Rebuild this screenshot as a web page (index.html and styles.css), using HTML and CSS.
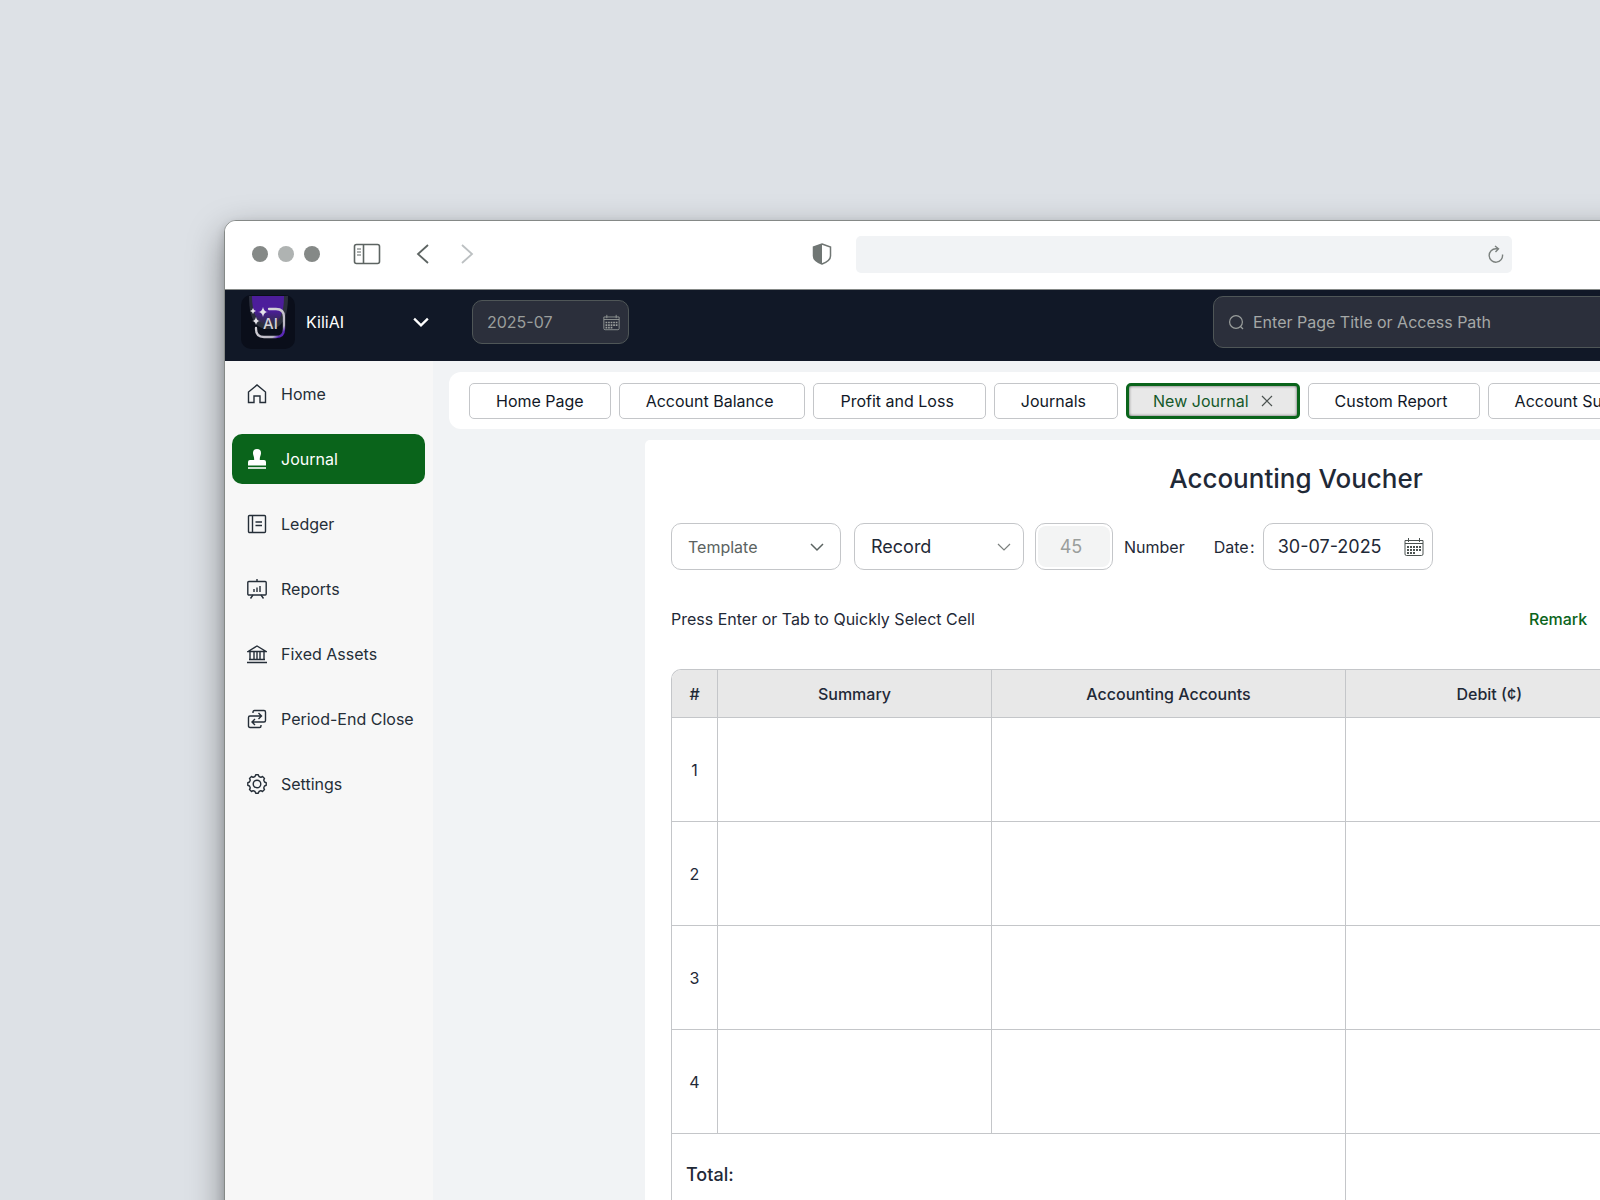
FILE: index.html
```html
<!DOCTYPE html>
<html lang="en">
<head>
<meta charset="utf-8">
<meta name="viewport" content="width=device-width, initial-scale=1">
<title>KiliAI – Accounting Voucher</title>
<link rel="stylesheet" href="styles.css">
</head>
<body>
<svg class="sprite" aria-hidden="true">
  <symbol id="calendar" viewBox="0 0 20 20">
    <path d="M1 3.5h18v13.500a1.500 1.500 0 0 1-1.500 1.500h-15a1.500 1.500 0 0 1-1.500-1.500zM1 6.500h18M4.500 1v4M15.500 1v4" fill="none" stroke="currentColor"/>
    <path d="M3 10h14M3 13h14M3 16h9" fill="none" stroke="currentColor" stroke-width="2" stroke-dasharray="2 1"/>
  </symbol>
  <symbol id="chevron" viewBox="0 0 14 14">
    <path d="M1 4l6 6 6-6" fill="none" stroke="currentColor" stroke-width="inherit"/>
  </symbol>
</svg>

<div class="window">
  <header class="toolbar">
    <div class="toolbar-left">
      <div class="lights"><i></i><i class="light"></i><i></i></div>
      <button class="plain panel-toggle" aria-label="Toggle sidebar">
        <svg width="28" height="22" viewBox="0 0 28 22" fill="none" stroke="#5d6462"><rect x="1.500" y="1.500" width="25" height="19" rx="2" stroke-width="1.600"/><path d="M10.500 1.500v19" stroke-width="1.600"/><path d="M4 6h4M4 9h4M4 12h4"/></svg>
      </button>
      <div class="history">
        <button class="plain" aria-label="Back"><svg width="14" height="20" viewBox="0 0 14 20" fill="none" stroke="#5d6462" stroke-width="1.800"><path d="M12 1L2 10l10 9"/></svg></button>
        <button class="plain" aria-label="Forward"><svg width="14" height="20" viewBox="0 0 14 20" fill="none" stroke="#bcc0c2" stroke-width="1.800"><path d="M2 1l10 9-10 9"/></svg></button>
      </div>
    </div>
    <div class="address">
      <svg width="20" height="22" viewBox="0 0 20 22"><path d="M10 1l8.500 3v9c0 4-4.500 6.500-8.500 8-4-1.500-8.500-4-8.500-8V4z" fill="#fff" stroke="#707674" stroke-width="1.500"/><path d="M10 1v20c-4-1.500-8.500-4-8.500-8V4z" fill="#707674"/></svg>
      <div class="address-field">
        <input type="text" aria-label="Address">
        <button class="plain" aria-label="Reload"><svg width="16" height="18" viewBox="0 0 16 18" fill="none" stroke="#7b807e" stroke-width="1.400"><path d="M14.500 9.500a6.700 6.700 0 1 1-6.500-5.700h2M7 1l3.500 2.800L7.500 7"/></svg></button>
      </div>
    </div>
  </header>

  <div class="navbar">
    <button class="plain company">
      <svg class="logo" width="54" height="54" viewBox="0 0 54 54">
        <defs>
          <linearGradient id="glow" x1="0" y1="0" x2="0" y2="1"><stop offset="0.500" stop-color="#4c1d9b"/><stop offset="1" stop-color="#2b2f3c"/></linearGradient>
          <linearGradient id="ring" x1="0" y1="0" x2="1" y2="1"><stop offset="0.300" stop-color="#d4d2d8"/><stop offset="0.800" stop-color="#b9b6c2"/><stop offset="0.900" stop-color="#5a28b8"/></linearGradient>
        </defs>
        <rect width="54" height="54" rx="10" fill="#0a0e1a"/>
        <path d="M8 1h39c0 24-7 33-19.500 33S8 25 8 1z" fill="#2b2f3c"/>
        <path d="M11 1h32c0 18-5 29-15.500 29S11 19 11 1z" fill="url(#glow)"/>
        <path d="M28 14h7q8 0 8 8v12q0 8-8 8h-12q-8 0-8-8v-1" fill="none" stroke="url(#ring)" stroke-width="2.300" stroke-linecap="round"/>
        <path d="M22 12q1 5 5 5-4 0-5 5-1-5-5-5 4 0 5-5zM15 22q1 4 4 4-3 0-4 4-1-4-4-4 3 0 4-4zM12 13l1 2 2 1-2 1-1 2-1-2-2-1 2-1z" fill="#e5e3ea"/>
        <text x="22" y="34" class="logo-text">AI</text>
      </svg>
      <span>KiliAI</span>
      <svg class="company-chevron" width="16" height="16"><use href="#chevron"/></svg>
    </button>
    <div class="month">
      <input type="text" value="2025-07" aria-label="Period">
      <svg width="17" height="17"><use href="#calendar"/></svg>
    </div>
    <div class="search">
      <svg width="16" height="16" viewBox="0 0 16 16" fill="none" stroke="#9a9e9c" stroke-width="1.200"><circle cx="8" cy="8" r="6.400"/><path d="M12.500 12.500l2.500 2.500"/></svg>
      <input type="search" placeholder="Enter Page Title or Access Path" aria-label="Search pages">
    </div>
  </div>

  <div class="body">
    <nav class="sidebar">
      <a href="#"><svg viewBox="0 0 20 20"><path d="M1.500 8L10 1l8.500 7v10.500h-5.500V12H7v6.500H1.500z"/></svg>Home</a>
      <a href="#" class="active"><svg viewBox="0 0 20 20"><path d="M10 0a4 4 0 0 1 4 4c0 2.500-1.200 3-1.200 7H17a2 2 0 0 1 2 2v3.500H1V13a2 2 0 0 1 2-2h4.200C7.200 7 6 6.500 6 4a4 4 0 0 1 4-4z" fill="currentColor" stroke="none"/><path d="M1 19h18" stroke-width="1.600"/></svg>Journal</a>
      <a href="#"><svg viewBox="0 0 20 20"><rect x="1.500" y="1.500" width="17" height="17" rx="1"/><path d="M5.500 1.500v17M8.500 8h6.500M8.500 11.500h6.500"/></svg>Ledger</a>
      <a href="#"><svg viewBox="0 0 20 20"><rect x="0.800" y="2.500" width="18.400" height="13.500" rx="1"/><path d="M10 0V2.500M6 16l-2.500 3.500M14 16l2.500 3.500M7 10v3M10 8.500V13M13 7v6"/></svg>Reports</a>
      <a href="#"><svg viewBox="0 0 20 20"><path d="M1 7.500L10 2l9 5.500zM0 18.500h20M3 7.500v8M7 7.500v8M10 7.500v8M13 7.500v8M17 7.500v8M2 15.500h16"/></svg>Fixed Assets</a>
      <a href="#"><svg viewBox="0 0 20 20"><path d="M6 4V3q0-1.500 1.500-1.500H17q1.500 0 1.500 1.500v8.500q0 1.500-1.500 1.500H5.500M8 10l-3 3 3 3M14 16v1q0 1.500-1.500 1.500H3q-1.500 0-1.500-1.500V8.500Q1.500 7 3 7h11.500M11.500 4l3 3-3 3"/></svg>Period-End Close</a>
      <a href="#"><svg viewBox="0 0 20 20"><circle cx="10" cy="10" r="3.800"/><path d="M8 2.500 8.700 .8h2.600L12 2.500l1.900.8L15.500 2.500l2 2-.8 1.600.8 1.900 1.700.7v2.600l-1.700.7-.8 1.900.8 1.600-2 2-1.600-.8-1.900.8-.7 1.700H8.700L8 17.500l-1.900-.8-1.600.8-2-2 .8-1.600L2.500 12l-1.700-.7V8.700L2.500 8l.8-1.900-.8-1.600 2-2 1.600.8z" stroke-linejoin="round"/></svg>Settings</a>
    </nav>

    <main class="content">
      <div class="tabs">
        <button class="pinned">Home Page</button>
        <button>Account Balance</button>
        <button>Profit and Loss</button>
        <button>Journals</button>
        <button class="current">New Journal<svg width="12" height="12" viewBox="0 0 12 12" fill="none" stroke="#4b5250" stroke-width="1.200"><path d="M1 1l10 10M11 1L1 11"/></svg></button>
        <button>Custom Report</button>
        <button>Account Summary</button>
      </div>

      <section class="voucher">
        <h1>Accounting Voucher</h1>
        <div class="controls">
          <div class="select template">
            <select aria-label="Template"><option>Template</option></select>
            <svg width="14" height="14" stroke-width="1.500"><use href="#chevron"/></svg>
          </div>
          <div class="select record">
            <select aria-label="Voucher type"><option>Record</option></select>
            <svg width="14" height="14" stroke-width="1.200"><use href="#chevron"/></svg>
          </div>
          <div class="number"><input type="text" id="number" value="45" disabled></div>
          <label for="number">Number</label>
          <label for="date" class="date-label">Date&#8202;:</label>
          <div class="date">
            <input type="text" id="date" value="30-07-2025">
            <svg width="20" height="20"><use href="#calendar"/></svg>
          </div>
        </div>
        <div class="hint">
          <p>Press Enter or Tab to Quickly Select Cell</p>
          <div class="actions"><a href="#">Remark</a></div>
        </div>
        <table>
          <colgroup><col class="c-num"><col class="c-summary"><col class="c-accounts"><col><col></colgroup>
          <thead><tr><th>#</th><th>Summary</th><th>Accounting Accounts</th><th>Debit (¢)</th><th></th></tr></thead>
          <tbody>
            <tr><td>1</td><td></td><td></td><td></td><td></td></tr>
            <tr><td>2</td><td></td><td></td><td></td><td></td></tr>
            <tr><td>3</td><td></td><td></td><td></td><td></td></tr>
            <tr><td>4</td><td></td><td></td><td></td><td></td></tr>
          </tbody>
          <tfoot><tr><th colspan="3">Total:</th><td></td><td></td></tr></tfoot>
        </table>
      </section>
    </main>
  </div>
</div>
</body>
</html>
```
FILE: styles.css
```css
* { box-sizing: border-box; }

html { height: 100%; }

body {
  margin: 0;
  height: 100%;
  overflow: hidden;
  padding: 220px 0 0 224px;
  background: #dde1e6;
  color: #1f2937;
  font: 16px/24px Inter, "Liberation Sans", sans-serif;
}

button, input, select { font: inherit; color: inherit; }
input { min-width: 0; border: 0; padding: 0; background: none; outline: 0; }
svg { flex: none; display: block; }
.sprite { position: absolute; width: 0; height: 0; }
.plain { display: flex; align-items: center; border: 0; padding: 0; background: none; }

/* The window runs on past the right and bottom edges of the page */
.window {
  width: 120vw;
  min-height: 120vh;
  display: flex;
  flex-direction: column;
  border: 1px solid #858987;
  border-radius: 12px 0 0 0;
  background: #f1f3f5;
  box-shadow: 0 14px 36px rgba(0, 0, 0, 0.4), 0 4px 10px rgba(0, 0, 0, 0.15);
}

.toolbar {
  height: 69px;
  display: grid;
  grid-template-columns: 1fr 744px 1fr;
  align-items: center;
  padding: 0 27px 2px;
  background: #fff;
  border-bottom: 1px solid #858987;
  border-radius: 11px 0 0 0;
}
.toolbar-left { display: flex; align-items: center; }
.lights { display: flex; gap: 10px; margin-right: 33px; }
.lights i { width: 16px; height: 16px; border-radius: 50%; background: #858987; }
.lights .light { background: #afb3b2; }
.history { display: flex; gap: 30px; margin-left: 35px; }
.address { display: flex; align-items: center; gap: 24px; padding-right: 44px; }
.address-field {
  flex: 1;
  height: 37px;
  display: flex;
  align-items: center;
  padding: 0 8px;
  border-radius: 5px;
  background: #f1f3f5;
}
.address-field input { flex: 1; }

.navbar {
  height: 71px;
  display: flex;
  align-items: center;
  padding: 0 16px 7px;
  background: #111827;
}
.company { width: 231px; height: 54px; color: #fff; }
.company span { margin-left: 11px; }
.company-chevron { margin-left: auto; margin-right: 43px; stroke-width: 2; }
.logo-text { font: 500 15px Inter, sans-serif; fill: #d4d2d8; }
.month, .search {
  display: flex;
  align-items: center;
  border: 1px solid #4f5657;
  border-radius: 10px;
  background: #2b2f3b;
  color: #9a9e9c;
}
.month { width: 157px; height: 44px; padding: 0 8px 0 14px; }
.month input { flex: 1; }
.search { flex: 1; height: 52px; margin-left: 584px; padding: 0 14px; gap: 9px; }
.search input { flex: 1; }
.search input::placeholder { color: #a5a8a7; opacity: 1; }

.body { flex: 1; display: flex; }
.sidebar {
  width: 208px;
  display: flex;
  flex-direction: column;
  gap: 15px;
  padding: 8px 8px 8px 7px;
  background: #f7f7f7;
}
.sidebar a {
  height: 50px;
  display: flex;
  align-items: center;
  gap: 14px;
  padding: 0 15px;
  border-radius: 10px;
  color: #252e38;
  text-decoration: none;
  white-space: nowrap;
}
.sidebar svg { width: 20px; height: 20px; fill: none; stroke: currentColor; stroke-width: 1.4; }
.sidebar .active { background: #0a641b; color: #fff; }

.content { flex: 1; min-width: 0; padding: 11px 0 0 16px; }
.tabs {
  height: 57px;
  display: flex;
  align-items: center;
  gap: 8px;
  padding: 0 20px;
  border-radius: 12px;
  background: #fff;
}
.tabs button {
  height: 36px;
  display: flex;
  align-items: center;
  gap: 12px;
  padding: 0 31px 0 26px;
  border: 1px solid #c4c6c9;
  border-radius: 5px;
  background: #fff;
  color: #111827;
  white-space: nowrap;
}
.tabs .pinned { padding: 0 26px; }
.tabs .current {
  padding: 0 24px;
  border: 3px solid #0a641b;
  background: #e8e8e8;
  box-shadow: inset 0 0 3px #555;
  color: #14592a;
}

.voucher {
  max-width: 1302px;
  min-height: 100%;
  margin: 11px auto 0;
  padding: 21px 26px;
  border-radius: 5px;
  background: #fff;
}
h1 { margin: 0; font-size: 26px; line-height: 36px; font-weight: 500; text-align: center; }
.controls { display: flex; align-items: center; margin-top: 26px; }
.select, .number, .date {
  height: 47px;
  display: flex;
  align-items: center;
  border: 1px solid #c4c6c9;
  border-radius: 10px;
}
.select, .date { width: 170px; padding: 0 16px; }
.select select { flex: 1; min-width: 0; appearance: none; border: 0; padding: 0; background: none; }
.template { color: #5b6361; }
.record { margin-left: 13px; padding-right: 12px; font-size: 18px; }
.record svg { color: #7b807e; }
.number { width: 78px; margin: 0 11px; padding: 2px; }
.number input {
  width: 100%;
  height: 100%;
  padding-right: 6px;
  border-radius: 8px;
  background: #f3f4f4;
  color: #9a9e9c;
  font-size: 18px;
  text-align: center;
}
.date-label { margin: 0 8px 0 29px; }
.date { padding: 0 8px 0 14px; font-size: 18px; }
.date input { flex: 1; }
.date svg { color: #4b5250; }

.hint { display: flex; justify-content: space-between; margin-top: 37px; }
.hint p { margin: 0; }
.actions { width: 392px; }
.actions a { color: #0a641b; font-weight: 500; text-decoration: none; }

table {
  width: 100%;
  margin-top: 38px;
  table-layout: fixed;
  border-collapse: separate;
  border-spacing: 0;
  border: solid #c4c6c9;
  border-width: 1px 0 0 1px;
  border-radius: 10px 0 0 0;
}
.c-num { width: 46px; }
.c-summary { width: 274px; }
.c-accounts { width: 354px; }
th, td { border: solid #c4c6c9; border-width: 0 1px 1px 0; padding: 0; text-align: center; }
th { font-weight: 500; }
thead th { height: 48px; background: #e8e8e8; }
thead th:first-child { border-radius: 9px 0 0 0; }
tbody td { height: 104px; }
tfoot th { height: 82px; padding-left: 14px; font-size: 18px; text-align: left; }
```
